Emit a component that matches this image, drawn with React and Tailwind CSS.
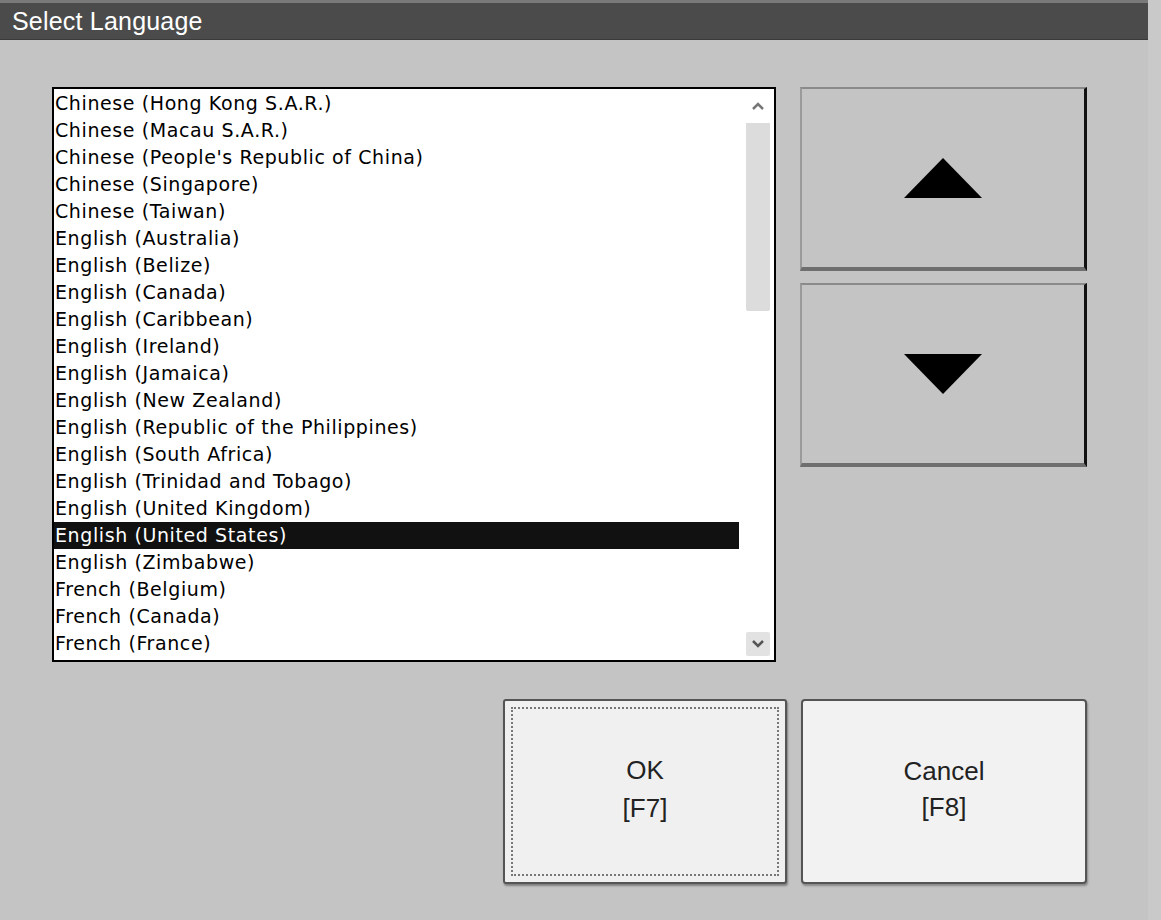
import { useState } from "react"

const languages = [
    "Chinese (Hong Kong S.A.R.)",
    "Chinese (Macau S.A.R.)",
    "Chinese (People's Republic of China)",
    "Chinese (Singapore)",
    "Chinese (Taiwan)",
    "English (Australia)",
    "English (Belize)",
    "English (Canada)",
    "English (Caribbean)",
    "English (Ireland)",
    "English (Jamaica)",
    "English (New Zealand)",
    "English (Republic of the Philippines)",
    "English (South Africa)",
    "English (Trinidad and Tobago)",
    "English (United Kingdom)",
    "English (United States)",
    "English (Zimbabwe)",
    "French (Belgium)",
    "French (Canada)",
    "French (France)",
]

function ArrowButton({ dir }) {
    return (
        <button className="h-[184px] w-full bg-[#c4c4c4] border-t-2 border-l-2 border-t-[#8a8a8a] border-l-[#9a9a9a] border-r-[3px] border-r-[#111] border-b-[4px] border-b-[#6e6e6e] flex items-center justify-center">
            <svg width="78" height="40" viewBox="0 0 78 40">
                {dir === "up"
                    ? <polygon points="39,0 78,40 0,40" fill="#000" />
                    : <polygon points="0,0 78,0 39,40" fill="#000" />}
            </svg>
        </button>
    )
}

export default function App() {
    const [selected, setSelected] = useState(16)

    return (
        <div className="w-full h-[920px] bg-[#c9c9c9] overflow-hidden" style={{ fontFamily: "'Liberation Sans', Arial, sans-serif" }}>
            <div className="w-[1148px] h-[920px] bg-[#c4c4c4] flex flex-col">
                {/* Title bar */}
                <div className="h-[40px] bg-[#4b4b4b] border-t-[3px] border-t-[#7a7a7a] border-b border-b-[#3a3a3a] flex items-center pl-[12px]">
                    <span className="text-[25px] text-white leading-none tracking-[0.2px]">Select Language</span>
                </div>

                <div className="flex pl-[52px] pt-[47px]">
                    {/* List box */}
                    <div className="w-[724px] h-[575px] bg-white border-2 border-black flex">
                        <ul className="flex-1 pt-[1px]" style={{ fontFamily: "'DejaVu Sans', Verdana, sans-serif" }}>
                            {languages.map((lang, i) => (
                                <li
                                    key={i}
                                    onClick={() => setSelected(i)}
                                    className={`h-[27px] pl-[1px] mr-[1px] text-[19px] leading-[27px] tracking-[0.6px] whitespace-nowrap ${i === selected ? "bg-[#111] text-white" : "text-black"}`}
                                >
                                    {lang}
                                </li>
                            ))}
                        </ul>
                        {/* Scrollbar */}
                        <div className="w-[34px] flex flex-col items-center py-[4px] pl-[2px]">
                            <div className="w-[26px] h-[26px] flex items-center justify-center">
                                <svg width="12" height="8" viewBox="0 0 12 8"><path d="M1 7 L6 2 L11 7" stroke="#777" strokeWidth="2.5" fill="none" /></svg>
                            </div>
                            <div className="w-[24px] h-[190px] mt-[2px] bg-[#dcdcdc] border-t-2 border-t-white rounded-[2px]"></div>
                            <div className="flex-1"></div>
                            <div className="w-[24px] h-[24px] bg-[#e2e2e2] rounded-[2px] flex items-center justify-center">
                                <svg width="12" height="8" viewBox="0 0 12 8"><path d="M1 1 L6 6 L11 1" stroke="#555" strokeWidth="2.5" fill="none" /></svg>
                            </div>
                        </div>
                    </div>

                    {/* Scroll buttons */}
                    <div className="w-[287px] ml-[24px] flex flex-col gap-[12px]">
                        <ArrowButton dir="up" />
                        <ArrowButton dir="down" />
                    </div>
                </div>

                {/* Bottom buttons */}
                <div className="flex pl-[503px] pt-[37px] gap-[14px]">
                    <button className="w-[284px] h-[185px] bg-[#f0f0f0] border-2 border-[#555] rounded-[3px] shadow-[1px_2px_2px_rgba(0,0,0,0.35)] p-[6px]">
                        <div className="w-full h-full border-2 border-dotted border-[#777] flex flex-col items-center justify-center pb-[6px] text-[26px] text-[#222] leading-[38px]">
                            <span>OK</span>
                            <span>[F7]</span>
                        </div>
                    </button>
                    <button className="w-[286px] h-[185px] bg-[#f2f2f2] border-2 border-[#555] rounded-[4px] shadow-[1px_2px_2px_rgba(0,0,0,0.3)] flex flex-col items-center justify-center pb-[6px] text-[26px] text-[#222] leading-[36px]">
                        <span>Cancel</span>
                        <span>[F8]</span>
                    </button>
                </div>
            </div>
        </div>
    )
}
